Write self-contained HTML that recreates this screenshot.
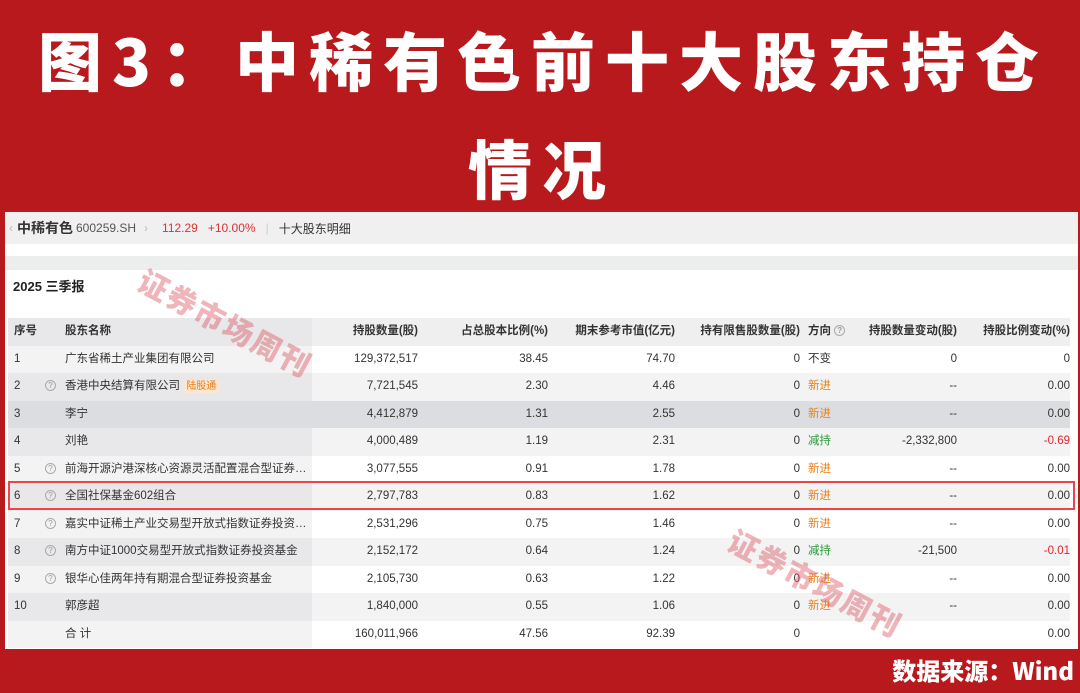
<!DOCTYPE html>
<html><head><meta charset="utf-8"><style>
*{margin:0;padding:0;box-sizing:border-box}
body{width:1080px;height:693px;background:#b8191c;position:relative;overflow:hidden;font-family:"Liberation Sans","Noto Sans CJK SC",sans-serif}
.t{position:absolute;color:#fff;font-weight:900;font-size:64px;line-height:80px;white-space:nowrap;font-family:"Noto Sans CJK SC","WenQuanYi Zen Hei",sans-serif;letter-spacing:10px}
.panel{position:absolute;left:5px;top:212px;width:1073px;height:437px;background:#fff}
.hb{position:absolute;left:0;top:0;width:100%;height:32px;background:#f0f0f0;font-size:12px;color:#333;display:flex;align-items:center;padding-left:4px}
.band{position:absolute;left:0;top:44px;width:100%;height:14px;background:#eceded}
.rep{position:absolute;left:8px;top:64px;font-size:13px;font-weight:bold;color:#222}
.row{position:absolute;left:8px;width:1062px;height:27.5px;font-size:11.5px;color:#333}
.row span{position:absolute;top:0;line-height:27.5px;white-space:nowrap}
.r{text-align:right}
.q{display:inline-block;width:11px;height:11px;border:1px solid #aaa;border-radius:50%;font-size:8px;line-height:9px;text-align:center;color:#999;font-style:normal;vertical-align:middle}
.wm{position:absolute;color:rgba(220,90,100,.45);font-size:30px;font-weight:900;transform:rotate(28deg);font-family:"Noto Sans CJK SC",sans-serif;white-space:nowrap;letter-spacing:2px}
</style></head><body>
<div class="t" style="left:38px;top:19px">图3：中稀有色前十大股东持仓</div>
<div class="t" style="left:468px;top:127px">情况</div>
<div class="panel">
<div class="hb"><span style="color:#bbb">‹ </span><b style="font-size:14px;margin-left:4px">中稀有色</b><span style="margin-left:3px;color:#555">600259.SH</span><span style="color:#bbb;margin-left:8px">›</span><span style="color:#d33;margin-left:14px">112.29</span><span style="color:#d33;margin-left:10px">+10.00%</span><span style="color:#ccc;margin-left:10px">|</span><span style="margin-left:10px">十大股东明细</span></div>
<div class="band"></div>
<div class="rep">2025 三季报</div>
</div>
<div id="tb"></div>
<div class="wm" style="left:130px;top:300px">证券市场周刊</div>
<div class="wm" style="left:720px;top:560px">证券市场周刊</div>
<div style="position:absolute;left:8px;top:481px;width:1067px;height:29px;border:2px solid #e8464a"></div>
<div style="position:absolute;right:6px;top:652px;color:#fff;font-weight:900;font-size:24px;font-family:'Noto Sans CJK SC',sans-serif">数据来源：Wind</div>
<script>
const rows=[
["序号","","股东名称","持股数量(股)","占总股本比例(%)","期末参考市值(亿元)","持有限售股数量(股)","方向","持股数量变动(股)","持股比例变动(%)"],
["1","","广东省稀土产业集团有限公司","129,372,517","38.45","74.70","0","不变","0","0"],
["2","q","香港中央结算有限公司","7,721,545","2.30","4.46","0","新进","--","0.00"],
["3","","李宁","4,412,879","1.31","2.55","0","新进","--","0.00"],
["4","","刘艳","4,000,489","1.19","2.31","0","减持","-2,332,800","-0.69"],
["5","q","前海开源沪港深核心资源灵活配置混合型证券…","3,077,555","0.91","1.78","0","新进","--","0.00"],
["6","q","全国社保基金602组合","2,797,783","0.83","1.62","0","新进","--","0.00"],
["7","q","嘉实中证稀土产业交易型开放式指数证券投资…","2,531,296","0.75","1.46","0","新进","--","0.00"],
["8","q","南方中证1000交易型开放式指数证券投资基金","2,152,172","0.64","1.24","0","减持","-21,500","-0.01"],
["9","q","银华心佳两年持有期混合型证券投资基金","2,105,730","0.63","1.22","0","新进","--","0.00"],
["10","","郭彦超","1,840,000","0.55","1.06","0","新进","--","0.00"],
["","","合 计","160,011,966","47.56","92.39","0","","","0.00"]];
let h="";
rows.forEach((r,i)=>{
 const top=318+i*27.5;
 let bg=i==0?"#efeff0":(i==3?"#dcdde0":(i%2==0?"#f3f3f4":"#fff"));
 let lbg=i==0?"#e8e8ea":(i==3?"#dcdde0":(i%2==0?"#e8e8ea":"#f3f3f4"));
 let fw=i==0?"bold":"normal";
 let dc=r[7]=="新进"?"#e8801a":(r[7]=="减持"?"#2a9a3a":"#333");
 h+=`<div class="row" style="top:${top}px;background:${bg};font-weight:${fw}">
 <div style="position:absolute;left:0;top:0;width:304px;height:100%;background:${lbg}"></div>
 <span style="left:6px">${r[0]}</span>
 ${r[1]?'<span style="left:37px"><i class="q">?</i></span>':''}
 <span style="left:57px">${r[2]}${i==2?' <i style="font-style:normal;background:#fde6d2;color:#e8801a;font-size:10px;padding:1px 3px">陆股通</i>':''}</span>
 <span class="r" style="right:652px">${r[3]}</span>
 <span class="r" style="right:522px">${r[4]}</span>
 <span class="r" style="right:395px">${r[5]}</span>
 <span class="r" style="right:270px">${r[6]}</span>
 <span style="left:800px;color:${i==0?'#333':dc}">${r[7]}${i==0?' <i class="q">?</i>':''}</span>
 <span class="r" style="right:113px">${r[8]}</span>
 <span class="r" style="right:0px;color:${r[9][0]=='-'?'#e8232a':'#333'}">${r[9]}</span></div>`;
});
document.getElementById("tb").innerHTML=h;
</script>
</body></html>
